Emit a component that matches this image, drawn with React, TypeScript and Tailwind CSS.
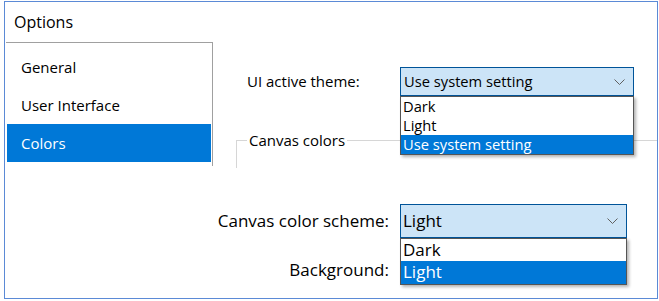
const font = { fontFamily: '"Open Sans", "Noto Sans", sans-serif' };

function Chevron() {
  return (
    <svg width="11" height="6" viewBox="0 0 11 6" className="shrink-0">
      <polyline points="0.5,0.5 5.5,5.5 10.5,0.5" fill="none" stroke="#606060" strokeWidth="1" />
    </svg>
  );
}

export default function App() {
  const sidebar = ["General", "User Interface", "Colors"];
  const themeOptions = ["Dark", "Light", "Use system setting"];
  const schemeOptions = ["Dark", "Light"];

  return (
    <div className="h-[301px] w-[659px] overflow-hidden bg-white pl-[4px] pt-[1px] text-black" style={font}>
      <div className="flex h-[298px] w-[654px] flex-col overflow-hidden border border-[#5b8ad6]">
        {/* Title */}
        <div className="flex h-[40px] items-center pl-[9px] text-[16px]">Options</div>

        {/* Sidebar + top settings */}
        <div className="flex h-[126px]">
          <div className="ml-[1px] h-[124px] w-[207px] shrink-0 border-t border-r border-[#a0a0a0] pt-[5px]">
            {sidebar.map((item) => (
              <div
                key={item}
                className={
                  item === "Colors"
                    ? "mx-[1px] flex h-[38px] items-center bg-[#0078d7] pl-[14px] text-[15px] text-white"
                    : "mx-[1px] flex h-[38px] items-center pl-[14px] text-[15px]"
                }
              >
                {item}
              </div>
            ))}
          </div>

          <div className="flex-1">
            <div className="mt-[25px] flex items-center pl-[34px]">
              <div className="w-[153px] text-[15px]">UI active theme:</div>
              <div className="relative z-10">
                <div className="flex h-[29px] w-[234px] items-center justify-between border border-[#005499] bg-[#cce4f7] pl-[3px] pr-[8px] text-[14.7px]">
                  <span>Use system setting</span>
                  <Chevron />
                </div>
                <div className="absolute left-0 top-[29px] w-[234px] border border-[#555] bg-white text-[14.7px] leading-[19px] shadow-[2px_2px_3px_rgba(0,0,0,0.3)]">
                  {themeOptions.map((opt) => (
                    <div
                      key={opt}
                      className={opt === "Use system setting" ? "h-[19px] bg-[#0078d7] pl-[2px] text-white" : "h-[19px] pl-[2px]"}
                    >
                      {opt}
                    </div>
                  ))}
                </div>
              </div>
            </div>

            {/* Canvas colors group box */}
            <div className="relative ml-[23px] mt-[44px] h-[28px] border-t border-l border-[#d6d6d6]">
              <span className="absolute left-[10px] top-[-11px] bg-white px-[2px] text-[15px] leading-[20px]">
                Canvas colors
              </span>
            </div>
          </div>
        </div>

        {/* Canvas color scheme */}
        <div className="mt-[36px] flex items-center">
          <div className="w-[384px] text-right text-[17px]">Canvas color scheme:</div>
          <div className="relative ml-[11px]">
            <div className="flex h-[34px] w-[227px] items-center justify-between border border-[#005499] bg-[#cce4f7] pl-[2px] pr-[8px] text-[17px]">
              <span>Light</span>
              <Chevron />
            </div>
            <div className="absolute left-0 top-[34px] z-10 w-[227px] border border-[#555] bg-white text-[17px] leading-[22px] shadow-[2px_2px_3px_rgba(0,0,0,0.3)]">
              {schemeOptions.map((opt) => (
                <div key={opt} className={opt === "Light" ? "h-[23px] bg-[#0078d7] pl-[2px] text-white" : "h-[22px] pl-[2px]"}>
                  {opt}
                </div>
              ))}
            </div>
          </div>
        </div>

        <div className="mt-[21px] flex h-[22px] items-center">
          <div className="w-[384px] text-right text-[17px]">Background:</div>
        </div>
      </div>
    </div>
  );
}
